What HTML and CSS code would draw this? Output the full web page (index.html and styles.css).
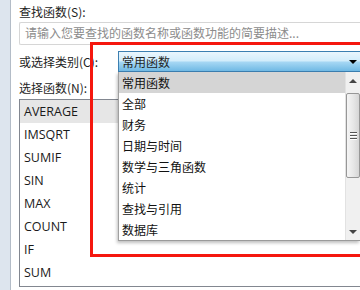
FILE: index.html
```html
<!DOCTYPE html>
<html lang="zh-CN">
<head>
    <meta charset="UTF-8">
    <title>插入函数</title>
    <link rel="stylesheet" href="styles.css">
</head>
<body>
    <div class="frame">
        <div class="edge"></div>
        <div class="content">
            <p class="label">查找函数(S):</p>
            <div class="search">请输入您要查找的函数名称或函数功能的简要描述...</div>

            <div class="row">
                <p class="label cat">或选择类别(C):</p>
                <div class="combo">
                    <div class="select">
                        <span>常用函数</span>
                        <span class="arrow"></span>
                    </div>
                    <div class="dropdown">
                        <ul>
                            <li class="hover">常用函数</li>
                            <li>全部</li>
                            <li>财务</li>
                            <li>日期与时间</li>
                            <li>数学与三角函数</li>
                            <li>统计</li>
                            <li>查找与引用</li>
                            <li>数据库</li>
                        </ul>
                        <div class="scroll">
                            <div class="btn up"></div>
                            <div class="thumb"><i></i><i></i><i></i></div>
                            <div class="track"></div>
                            <div class="btn down"></div>
                        </div>
                    </div>
                </div>
            </div>

            <p class="label fn">选择函数(N):</p>
            <ul class="funcs">
                <li class="sel">AVERAGE</li>
                <li>IMSQRT</li>
                <li>SUMIF</li>
                <li>SIN</li>
                <li>MAX</li>
                <li>COUNT</li>
                <li>IF</li>
                <li>SUM</li>
            </ul>
        </div>
    </div>

    <div class="mark"></div>
</body>
</html>
```

FILE: styles.css
```css
* {
    margin: 0;
    padding: 0;
    box-sizing: border-box;
}

body {
    width: 360px;
    height: 290px;
    overflow: hidden;
    background: #fff;
    font-family: "Noto Sans CJK SC", "Noto Sans", sans-serif;
    font-size: 12px;
    color: #1e1e1e;
    position: relative;
}

.frame {
    display: flex;
    height: 290px;
    overflow: hidden;
}

.edge {
    width: 11px;
    flex-shrink: 0;
    background: #dde5ee;
    border-right: 1px solid #b3bcc7;
}

.content {
    flex: 1;
    padding: 3px 0 0 8px;
    min-width: 0;
}

.label {
    line-height: 18px;
    white-space: nowrap;
}

.search {
    margin-top: 1px;
    height: 23px;
    border: 1px solid #d6d6d6;
    border-right: none;
    border-radius: 2px 0 0 2px;
    padding-left: 5px;
    line-height: 20px;
    color: #8c8c8c;
    white-space: nowrap;
    overflow: hidden;
}

.row {
    display: flex;
    align-items: center;
    margin-top: 6px;
    height: 21px;
}

.cat {
    width: 99px;
    flex-shrink: 0;
}

.combo {
    position: relative;
    flex: 1;
}

.select {
    height: 21px;
    border: 1px solid #3c7fb1;
    border-right: none;
    background: linear-gradient(#eaf6fd 0%, #d3edfb 45%, #a4d6f3 55%, #70b9e4 100%);
    padding: 0 3px;
    line-height: 19px;
    display: flex;
    justify-content: space-between;
}

.arrow {
    margin-top: 8px;
    width: 0;
    height: 0;
    border-left: 4px solid transparent;
    border-right: 4px solid transparent;
    border-top: 4px solid #000;
}

.dropdown {
    position: absolute;
    top: 100%;
    left: 0;
    right: 0;
    height: 169px;
    background: #fff;
    border-left: 1px solid #a0a0a0;
    border-bottom: 1px solid #9a9a9a;
    box-shadow: -1px 2px 3px rgba(0, 0, 0, 0.25);
    display: flex;
    z-index: 2;
}

.dropdown ul {
    flex: 1;
    list-style: none;
}

.dropdown li {
    height: 21px;
    line-height: 21px;
    padding-left: 3px;
    font-size: 12px;
    color: #111;
}

.dropdown li.hover {
    background: #d5d5d5;
}

.scroll {
    width: 15px;
    display: flex;
    flex-direction: column;
    background: #f0f0f0;
    border-left: 1px solid #e2e2e2;
}

.btn {
    height: 20px;
    position: relative;
}

.btn::after {
    content: "";
    position: absolute;
    left: 3px;
    border-left: 4px solid transparent;
    border-right: 4px solid transparent;
}

.up::after {
    top: 7px;
    border-bottom: 4px solid #444;
}

.down::after {
    top: 10px;
    border-top: 4px solid #444;
}

.thumb {
    height: 85px;
    margin-top: 1px;
    border: 1px solid #979797;
    border-radius: 2px;
    background: linear-gradient(90deg, #f5f5f5, #e6e6e6 55%, #d6d6d6);
    display: flex;
    flex-direction: column;
    justify-content: center;
    align-items: center;
    gap: 2px;
}

.thumb i {
    width: 7px;
    height: 1px;
    background: #555;
    box-shadow: 0 1px 0 #fff;
}

.track {
    flex: 1;
}

.fn {
    margin-top: 7px;
}

.funcs {
    margin-top: 2px;
    height: 188px;
    border: 1px solid #828790;
    border-right: none;
    list-style: none;
    overflow: hidden;
    font-family: "Open Sans", "Liberation Sans", sans-serif;
    font-size: 12.5px;
    color: #1a1a1a;
}

.funcs li {
    height: 23px;
    line-height: 23px;
    padding-left: 4px;
}

.funcs li.sel {
    background: #e6e6e6;
}

.mark {
    position: absolute;
    left: 90px;
    top: 42px;
    right: 0;
    height: 215px;
    border: 3px solid #f5170e;
    border-right: none;
    z-index: 3;
}
```
